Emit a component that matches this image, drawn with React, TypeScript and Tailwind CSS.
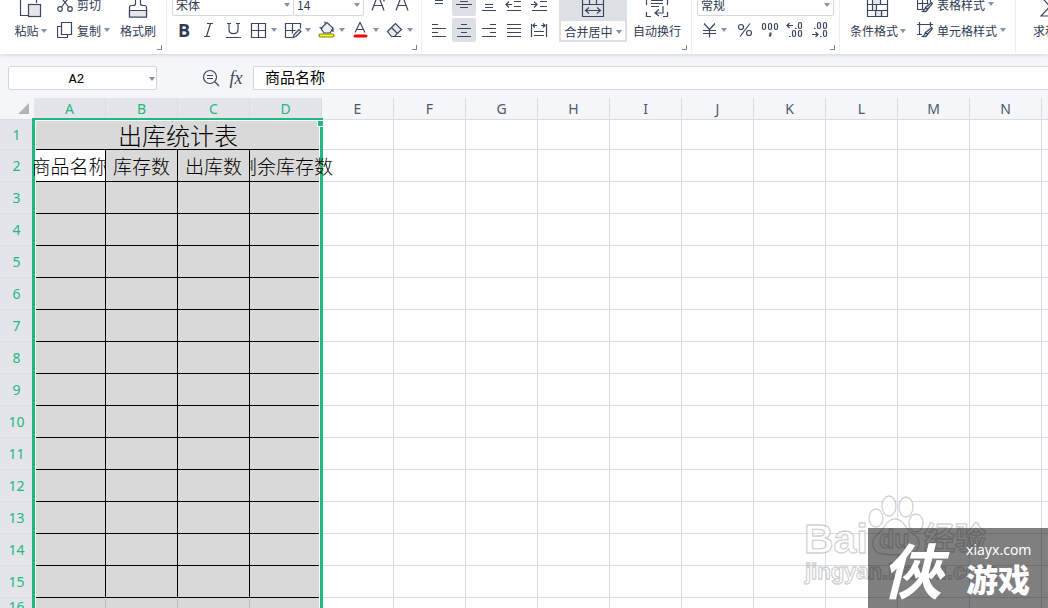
import type { ReactNode } from 'react';

const COLUMNS = 'ABCDEFGHIJKLMNOPQRSTUVWXYZ'.split('');
const ROWS = Array.from({ length: 60 }, (_, i) => i + 1);
const HEADINGS = ['商品名称', '库存数', '出库数', '剩余库存数'];
const SELECTED_COLUMNS = 4;
const LAST_TABLE_ROW = 15;

function Icon({ children, w = 24, h = 24 }: { children: ReactNode; w?: number; h?: number }) {
  return (
    <svg
      width={w}
      height={h}
      viewBox={`0 0 ${w} ${h}`}
      fill="none"
      stroke="#3b4660"
      strokeWidth="1.2"
      className="shrink-0"
      aria-hidden="true"
    >
      {children}
    </svg>
  );
}

function Caret() {
  return (
    <svg width="6" height="4" viewBox="0 0 6 4" className="shrink-0" aria-hidden="true">
      <path d="M0 0h6L3 4z" fill="#8791a7" />
    </svg>
  );
}

function Group({ children, className, corner = true }: { children: ReactNode; className: string; corner?: boolean }) {
  return (
    <div className={`relative flex h-[52px] shrink-0 items-end border-r border-[#eceef1] pb-[10px] ${className}`}>
      {children}
      {corner && (
        <button aria-label="更多设置" className="absolute right-1 bottom-[2px] h-[5px] w-[5px] border-r border-b border-[#7c869c]" />
      )}
    </div>
  );
}

function Tool({ label, active = false, children }: { label: string; active?: boolean; children: ReactNode }) {
  return (
    <button
      aria-label={label}
      className={`flex h-6 w-6 items-center justify-center rounded-xs ${active ? 'bg-[#dde1e6]' : ''}`}
    >
      <Icon>{children}</Icon>
    </button>
  );
}

function DropTool({ label, className = 'w-[33px]', children }: { label: string; className?: string; children: ReactNode }) {
  return (
    <button aria-label={label} className={`flex h-6 items-center ${className}`}>
      <Icon>{children}</Icon>
      <Caret />
    </button>
  );
}

function BigTool({ label, caret = false, className, children }: { label: string; caret?: boolean; className: string; children: ReactNode }) {
  return (
    <button className={`flex h-[50px] flex-col items-center ${className}`}>
      <Icon h={26}>{children}</Icon>
      <span className="flex h-6 items-center gap-[2px] pt-0.5 whitespace-nowrap">
        {label}
        {caret && <Caret />}
      </span>
    </button>
  );
}

function SmallTool({ label, caret = true, children }: { label: string; caret?: boolean; children: ReactNode }) {
  return (
    <button className="flex h-6 items-center whitespace-nowrap">
      <Icon w={16} h={20}>{children}</Icon>
      <span className="mr-[3px] ml-1 pt-0.5">{label}</span>
      {caret && <Caret />}
    </button>
  );
}

function Picker({ label, value, className }: { label: string; value: string; className: string }) {
  return (
    <div className={`relative h-6 ${className}`}>
      <select
        aria-label={label}
        className="block h-6 w-full appearance-none rounded-xs border border-[#d5d9df] bg-white pt-0.5 pl-[3px] leading-5 outline-none"
      >
        <option>{value}</option>
      </select>
      <span className="pointer-events-none absolute top-[11px] right-1 flex">
        <Caret />
      </span>
    </div>
  );
}

function Ribbon() {
  return (
    <div className="relative z-10 flex h-[54px] items-start overflow-hidden bg-white text-xs text-[#2f3a52] shadow-[0_1px_4px_rgba(60,70,90,0.2)]">
      <Group className="gap-2 pr-[10px] pl-3">
        <BigTool label="粘贴" caret className="w-[37px]">
          <path d="M9 23.500H1.500V1.500H17.500V11" />
          <rect x="9.500" y="12.500" width="12" height="12" fill="#e4e6ea" />
        </BigTool>
        <div className="flex w-[55px] flex-col gap-[2px]">
          <SmallTool label="剪切" caret={false}>
            <path d="M3 2l8.500 11M13 2L4.500 13" />
            <circle cx="3" cy="15" r="2.300" />
            <circle cx="13" cy="15" r="2.300" />
          </SmallTool>
          <SmallTool label="复制">
            <path d="M4 6.500H.5v11h10V15M4.500 2.500h10v12h-10z" />
          </SmallTool>
        </div>
        <BigTool label="格式刷" className="w-9">
          <path d="M9.500 1v10.500q0 2-2 2h-2q-2 0-2 2v9.500h17v-9.500q0-2-2-2h-2q-2 0-2-2V1" />
          <path d="M3.500 18.500h17v6.500h-17z" fill="#e4e6ea" />
        </BigTool>
      </Group>

      <Group className="pr-[5px] pl-[5px]">
        <div className="flex flex-col gap-[2px]">
          <div className="flex">
            <Picker label="字体" value="宋体" className="w-[122px]" />
            <Picker label="字号" value="14" className="-ml-px mr-[3px] w-[71px]" />
            <Tool label="增大字号">
              <path d="M5 18.500l6-16 6 16M7 13.500h8M15 7.500h4M17 5.500v4" />
            </Tool>
            <Tool label="减小字号">
              <path d="M5 18.500l6-16 6 16M7 13.500h8" />
            </Tool>
          </div>
          <div className="flex gap-px">
            <button aria-label="加粗" className="h-6 w-6 font-['Open_Sans',sans-serif] text-lg leading-6 font-bold">
              B
            </button>
            <Tool label="倾斜">
              <path d="M10 5.500h6M7 18.500h6M13.500 5.500l-4 13" />
            </Tool>
            <Tool label="下划线">
              <path d="M5 5.500h4M14 5.500h4M7 5.500v6c0 5.500 9 5.500 9 0v-6M4 19.500h15" />
            </Tool>
            <DropTool label="边框">
              <path d="M4.500 5.500h14v14h-14zM11.500 5.500v14M4.500 12.500h14" />
            </DropTool>
            <DropTool label="绘制边框">
              <path d="M11 19.500H4.500v-14h15v5M11.500 5.500v10M4.500 12.500h10" />
              <path d="M12 19.500l1-3 5-5 2 2-5 5z" fill="#dfe2e6" />
            </DropTool>
            <DropTool label="填充颜色">
              <path d="M6 10.500l6-6 6 5.500-3 5H9zM10 5.500v-2M4.500 9.500l3 1M18 10v4" fill="#edf0f2" />
              <rect x="4" y="16" width="15" height="3" rx="1.500" fill="#ff0" stroke="#817f35" />
            </DropTool>
            <DropTool label="字体颜色">
              <path d="M6 14.500l5-10 5 10M8 11.500h6" />
              <path d="M6 18h11" stroke="#f00" strokeWidth="3" strokeLinecap="round" />
            </DropTool>
            <DropTool label="清除">
              <path d="M4.500 13.500l8-8 6 6-7 7h-3zM8.500 9.500l6 6M12 18.500h6" fill="#e8eaed" />
            </DropTool>
          </div>
        </div>
      </Group>

      <Group className="pr-[7px] pl-[5px]">
        <div className="flex flex-col gap-[2px]">
          <div className="flex gap-px">
            <Tool label="顶端对齐">
              <path d="M5 5.500h14M8 8.500h8M8 11.500h8" />
            </Tool>
            <Tool label="垂直居中" active>
              <path d="M8 9.500h8M4 12.500h16M8 15.500h8" />
            </Tool>
            <Tool label="底端对齐">
              <path d="M8 12.500h8M8 15.500h8M5 18.500h14" />
            </Tool>
            <Tool label="减少缩进">
              <path d="M4 12.500h6M7 9.500l-3 3 3 3M12 9.500h7M12 14.500h7M5 18.500h14" />
            </Tool>
            <Tool label="增加缩进">
              <path d="M4 12.500h6M7 9.500l3 3-3 3M13 9.500h7M13 14.500h7M5 18.500h15" />
            </Tool>
          </div>
          <div className="flex gap-px">
            <Tool label="左对齐">
              <path d="M5 6.500h6M5 10.500h14M5 14.500h6M5 18.500h14" />
            </Tool>
            <Tool label="水平居中" active>
              <path d="M9 6.500h6M5 10.500h14M9 14.500h6M5 18.500h14" />
            </Tool>
            <Tool label="右对齐">
              <path d="M13 6.500h6M5 10.500h14M13 14.500h6M5 18.500h14" />
            </Tool>
            <Tool label="两端对齐">
              <path d="M5 6.500h14M5 10.500h14M5 14.500h14M5 18.500h14" />
            </Tool>
            <Tool label="分散对齐">
              <path d="M4.500 6v13M19.500 6v13M6 7.500h4M14 7.500h4M8 5.500l-2 2 2 2M16 5.500l2 2-2 2M7 13.500h10M7 17.500h10" />
            </Tool>
          </div>
        </div>
        <button className="mr-[3px] ml-2 flex h-[50px] w-[68px] flex-col items-center bg-[#dde1e6]">
          <Icon h={26}>
            <path d="M1.500 3.500h21v21h-21zM1.500 12.500h21M8.500 3.500v9M15.500 3.500v9M4.500 18.500h15M8 15.500l-3.500 3 3.500 3M16 15.500l3.500 3-3.500 3" />
          </Icon>
          <span className="mt-[3px] flex h-[19px] w-16 items-center justify-center gap-[3px] bg-white pt-0.5 whitespace-nowrap">
            合并居中
            <Caret />
          </span>
        </button>
        <BigTool label="自动换行" className="w-[54px]">
          <path d="M1.500 8v5M22.500 8v5M1.500 20v4.500H6M18 24.500h4.500V20M6 8.500h12M6 11.500h12M6 14.500h8M18 14v7h-7M14 17.500l-4 3.500 4 3" />
        </BigTool>
      </Group>

      <Group className="pr-[5px] pl-[5px]">
        <div className="flex flex-col gap-[2px]">
          <Picker label="数字格式" value="常规" className="w-[137px]" />
          <div className="flex gap-px">
            <DropTool label="货币" className="w-[35px]">
              <path d="M7 5.500l5.500 6 5.500-6M6 12.500h13M6 15.500h13M12.500 11.500v8" />
            </DropTool>
            <Tool label="百分比">
              <circle cx="8" cy="9" r="2.500" />
              <circle cx="16" cy="15" r="2.500" />
              <path d="M17 5.500l-10 13" />
            </Tool>
            <Tool label="千位分隔">
              <rect x="4.500" y="5.500" width="3" height="6" rx="1.500" />
              <rect x="10.500" y="5.500" width="3" height="6" rx="1.500" />
              <rect x="16.500" y="5.500" width="3" height="6" rx="1.500" />
              <path d="M12.500 14.500v2l-1 2" strokeWidth="2" />
            </Tool>
            <Tool label="增加小数位">
              <path d="M4 7.500h6M6.500 5l-2.500 2.500 2.500 2.500M12 10.500h1.500M6 18.500h1.500" />
              <rect x="15.500" y="4.500" width="3" height="6" rx="1.500" />
              <rect x="9.500" y="12.500" width="3" height="6" rx="1.500" />
              <rect x="15.500" y="12.500" width="3" height="6" rx="1.500" />
            </Tool>
            <Tool label="减少小数位">
              <path d="M4 16.500h6M7.500 14l2.500 2.500-2.500 2.500M12 18.500h1.500M6 10.500h1.500" />
              <rect x="9.500" y="4.500" width="3" height="6" rx="1.500" />
              <rect x="15.500" y="4.500" width="3" height="6" rx="1.500" />
              <rect x="15.500" y="12.500" width="3" height="6" rx="1.500" />
            </Tool>
          </div>
        </div>
      </Group>

      <Group className="gap-[9px] pr-[9px] pl-2" corner={false}>
        <BigTool label="条件格式" caret className="w-15">
          <path d="M6.500 12.500h4v6h-4zM6.500 4.500h8v8h-8zM9.500 18.500h8v6h-8z" fill="#e4e6ea" stroke="none" />
          <path d="M1.500 4.500h20v20h-20zM1.500 12.500h20M1.500 18.500h20M6.500 4.500v14M14.500 4.500v8M10.500 12.500v6M9.500 18.500v6M15.500 18.500v6" />
        </BigTool>
        <div className="flex flex-col gap-[2px]">
          <SmallTool label="表格样式">
            <path d="M7 15.500H.5v-11h13v4M.5 9.500h11M5.500 4.500v11M10.500 4.500v6" />
            <path d="M14.500 8.500l1 1-5 6-2-2zM8.500 13.500l2 2q-1 3-5 2 2-1 3-4z" fill="#dfe2e6" />
          </SmallTool>
          <SmallTool label="单元格样式">
            <path d="M2.500 2v13M0 4.500h16M13.500 2v5M0 14.500h5" />
            <path d="M14.500 7.500l1 1-5 6-2-2zM8.500 12.500l2 2q-1 3-5 2 2-1 3-4z" fill="#dfe2e6" />
          </SmallTool>
        </div>
      </Group>

      <Group className="pl-[15px]" corner={false}>
        <BigTool label="求和" caret className="w-9">
          <path d="M21 7V4.500H4l9 10-9 9.500h17v-3" />
        </BigTool>
      </Group>
    </div>
  );
}

function FormulaBar() {
  return (
    <div className="flex h-11 items-start pt-3 pl-2">
      <div className="relative h-6 w-[149px]">
        <input
          aria-label="名称框"
          defaultValue="A2"
          className="block h-6 w-full rounded-xs border border-[#d2d6dc] bg-white pt-0.5 pr-3 text-center font-['Liberation_Mono',monospace] text-[13px] text-black outline-none"
        />
        <span className="pointer-events-none absolute top-[11px] right-[2px] flex">
          <Caret />
        </span>
      </div>
      <button aria-label="查找" className="ml-[42px] flex">
        <Icon>
          <circle cx="11" cy="11" r="6.500" />
          <path d="M16 16l4 4M8 9.500h6M8 12.500h6" />
        </Icon>
      </button>
      <button aria-label="插入函数" className="mr-1 w-[26px] font-['Liberation_Serif',serif] text-lg leading-6 text-[#3b4660] italic">
        fx
      </button>
      <input
        aria-label="编辑栏"
        defaultValue="商品名称"
        className="h-6 min-w-0 flex-1 rounded-l-xs border border-r-0 border-[#d2d6dc] bg-white pb-1 pl-[11px] text-[15px] text-black outline-none"
      />
    </div>
  );
}

function BodyCells({ row }: { row: number }) {
  const bordered = row <= LAST_TABLE_ROW;
  return COLUMNS.map((col, i) => {
    if (i >= SELECTED_COLUMNS) {
      return <td key={col} className="border-r border-b border-[#d8dce6] p-0" />;
    }
    if (row === 1) {
      return i === 0 ? (
        <td key={col} colSpan={SELECTED_COLUMNS} className="border-b border-black bg-[#d9d9d9] p-0 text-center text-2xl leading-7 font-light">
          出库统计表
        </td>
      ) : null;
    }
    return (
      <td
        key={col}
        className={`border-r border-b p-0 ${bordered ? 'border-black' : 'border-[#b8bac4]'} ${
          row === 2 && i === 0 ? 'bg-white' : 'bg-[#d9d9d9]'
        }`}
      >
        {row === 2 && (
          <div
            className={`relative z-20 flex justify-center text-[19px] leading-[31px] font-light whitespace-nowrap ${
              i === 3 ? '[clip-path:inset(0_-20px_0_0)]' : 'overflow-hidden'
            }`}
          >
            {HEADINGS[i]}
          </div>
        )}
      </td>
    );
  });
}

function rowHeight(row: number) {
  if (row === 1) return 'h-[30px]';
  return row <= LAST_TABLE_ROW ? 'h-8' : 'h-[19px]';
}

function Sheet() {
  return (
    <div className="relative min-h-0 flex-1 overflow-hidden">
      <table className="w-px table-fixed border-separate border-spacing-0 bg-white text-black">
        <colgroup>
          <col className="w-[34px]" />
          {COLUMNS.map((col) => (
            <col key={col} className="w-[72px]" />
          ))}
        </colgroup>
        <thead className="font-['Noto_Sans',sans-serif] text-sm leading-5">
          <tr className="h-[22px]">
            <th className="border-b border-[#d8dce6] bg-[#f5f6f8] p-0" aria-label="全选">
              <svg width="12" height="12" className="ml-[18px]" aria-hidden="true">
                <path d="M11 0v11H0z" fill="#b4b4b6" />
              </svg>
            </th>
            {COLUMNS.map((col, i) => (
              <th
                key={col}
                className={`border-r border-b border-[#d8dce6] p-0 font-normal ${
                  i < SELECTED_COLUMNS ? 'bg-[#e4e5ea] text-[#23b87f]' : 'bg-[#f5f6f8] text-[#4d5870]'
                }`}
              >
                {col}
              </th>
            ))}
          </tr>
        </thead>
        <tbody>
          {ROWS.map((row) => (
            <tr key={row} className={rowHeight(row)}>
              <th className="border-r border-b border-[#d8dce6] bg-[#e4e5ea] p-0 font-['Noto_Sans',sans-serif] text-sm leading-[18px] font-normal text-[#23b87f]">
                {row}
              </th>
              <BodyCells row={row} />
            </tr>
          ))}
        </tbody>
      </table>
      {/* selection outline over columns A-D, with its fill handle */}
      <div className="pointer-events-none absolute top-5 -bottom-2 left-8 w-[291px] border-3 border-t-2 border-[#1fb981] shadow-[inset_0_0_0_1px_#fff]">
        <span className="absolute top-0 -right-1 h-[7px] w-[7px] border border-white bg-[#1fb981]" />
      </div>
    </div>
  );
}

function Watermark() {
  return (
    <div className="pointer-events-none absolute right-0 bottom-0 z-30 h-[118px] w-[248px] font-['Liberation_Sans',sans-serif]">
      <svg width="248" height="118" className="absolute inset-0" aria-label="Baidu 经验 jingyan.baidu.com">
        <g fill="#ffffff" fillOpacity="0.7" stroke="#9a9a9a" strokeOpacity="0.45" strokeWidth="1.300">
          <ellipse cx="76" cy="28" rx="7" ry="9" />
          <ellipse cx="89" cy="16" rx="7" ry="10" />
          <ellipse cx="106" cy="17" rx="7" ry="10" />
          <ellipse cx="116" cy="33" rx="7" ry="9" />
          <path d="M95 29c9 0 10 10 18 15 9 5 8 18-3 20-7 1-22 1-28 0-11-2-12-14-4-20 7-5 8-15 17-15z" />
          <text x="4" y="63" fontSize="41" fontWeight="bold">Bai</text>
          <text x="79" y="58" fontSize="25" fontWeight="bold">du</text>
          <text x="124" y="59" fontSize="31" fontWeight="bold" fontFamily="Noto Sans CJK SC">经验</text>
          <text x="5" y="89" fontSize="22" fontWeight="bold">jingyan.baidu.com</text>
        </g>
      </svg>
      <div className="absolute right-0 bottom-0 flex h-20 w-[180px] items-center bg-black/50 pl-[14px] text-white">
        <span className="w-[70px] font-['Noto_Sans_CJK_TC',sans-serif] text-6xl leading-[72px] font-bold italic">俠</span>
        <div className="ml-[14px] pt-1 font-['Noto_Sans','Noto_Sans_CJK_SC',sans-serif]">
          <p className="text-sm leading-5">xiayx.com</p>
          <p className="text-[32px] leading-10 font-black">游戏</p>
        </div>
      </div>
    </div>
  );
}

export default function App() {
  return (
    <main className="relative flex h-screen flex-col overflow-hidden bg-[#f5f6f8] font-['Noto_Sans_CJK_SC',sans-serif]">
      <Ribbon />
      <FormulaBar />
      <Sheet />
      <Watermark />
    </main>
  );
}
